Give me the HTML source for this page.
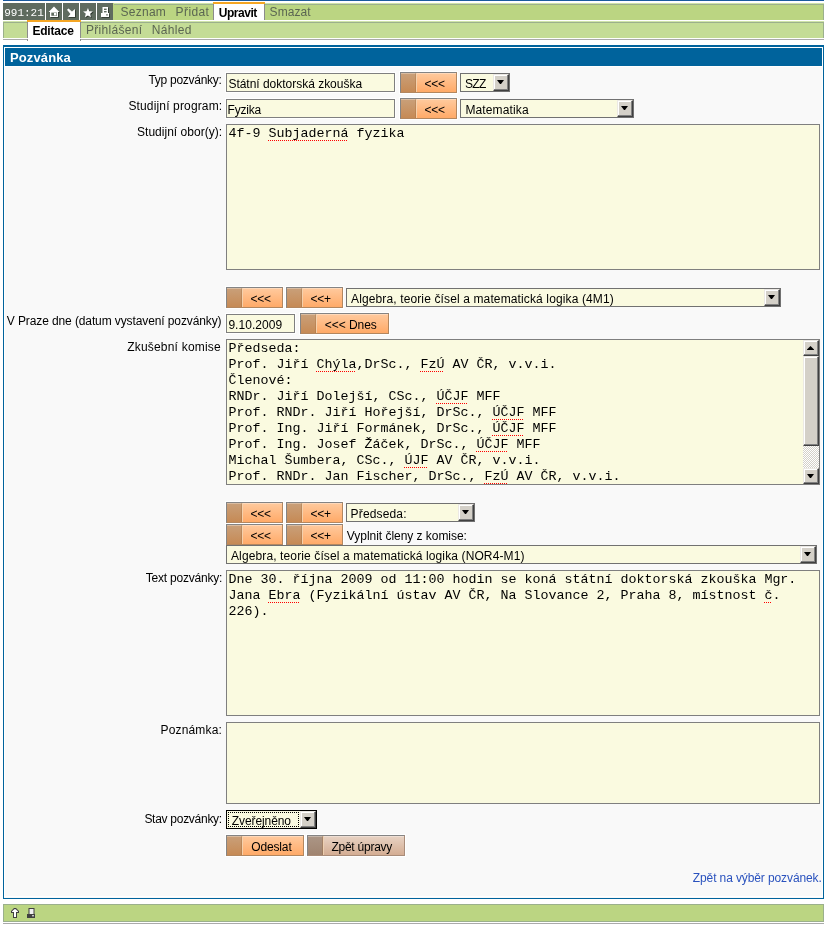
<!DOCTYPE html>
<html lang="cs"><head><meta charset="utf-8"><title>Pozvánka</title>
<style>
html,body{margin:0;padding:0;background:#fff;}
#r{will-change:transform;position:relative;width:827px;height:925px;overflow:hidden;background:#fff;font:12px/14px "Liberation Sans",Arial,sans-serif;color:#000;}
#r div,#r span,#r a,#r svg,#r i{position:absolute;box-sizing:border-box;white-space:nowrap;}
#r span,#r a{line-height:14px;height:14px;}
.inp{background:#fafae0;border:1px solid #7f7f7f;height:19px;box-shadow:0 0 0 1px #fff;}
.sel{background:#fafae0;border:1px solid #717171;height:19px;}
.db,.sb{background:#d4d0c8;border:1px solid;border-color:#ece9e4 #404040 #404040 #ece9e4;box-shadow:inset -1px -1px 0 #808080,inset 1px 1px 0 #fff;}
.sel .db{right:0;top:0;width:16px;height:17px;}
.db:after{content:"";position:absolute;left:3px;top:5px;width:7px;height:4px;background:#000;clip-path:polygon(0 0,100% 0,57% 100%,43% 100%);}
.btn{height:21px;border:1px solid;border-color:#848484 #b3875f #b3875f #848484;background:linear-gradient(#ffca9e,#ffaa68);}
.btn{box-shadow:0 0 0 1px #fff,inset 0 1px 0 rgba(255,255,255,.3);}
.btn i{left:0;top:0;width:16px;height:19px;background:linear-gradient(#c9a07a,#c68a55);border-right:1px solid rgba(255,224,190,.8);box-shadow:inset -1px 0 0 rgba(150,90,40,.25),inset 0 1px 0 rgba(255,255,255,.3);}
.btn.g{background:linear-gradient(#e8d3c4,#d4ad93);border-color:#848484 #a98c79 #a98c79 #848484;}
.btn.g i{background:linear-gradient(#ab9686,#a08470);}
.ta{background:#fafae0;border:1px solid #7f7f7f;font:13.333px/16px "Liberation Mono","Courier New",monospace;}
.ta>div.l{left:1.5px;height:16px;line-height:16px;}
.ta u{text-decoration:none;position:relative;}
.ta u:after{content:"";position:absolute;left:-0.5px;right:0.5px;top:14px;height:1px;background:repeating-linear-gradient(90deg,#f00 0 1px,transparent 1px 2px);}
.nv{color:#5b6652;}
.bd{font-weight:bold;}
</style></head>
<body><div id="r">
<div style="left:3px;top:0px;width:821px;height:1px;background:#1a5a9e;"></div>
<div style="left:3px;top:3px;width:821px;height:1px;background:#cfe3a8;"></div>
<div style="left:3px;top:4px;width:821px;height:1px;background:#9bb08c;"></div>
<div style="left:3px;top:5px;width:821px;height:15px;background:#bbd582;"></div>
<div style="left:823px;top:4px;width:1px;height:16px;background:#9bb08c;"></div>
<div style="left:3px;top:3px;width:42px;height:17px;background:#5f6b5f;"></div>
<span style="left:4.2px;top:7px;letter-spacing:0.0px;color:#fff;font:11px/12px 'Liberation Mono',monospace;height:12px;">991:21</span>
<div style="left:45px;top:3px;width:1px;height:17px;background:#fff;"></div>
<div style="left:46px;top:3px;width:16px;height:17px;background:#5f6b5f;"></div>
<div style="left:62px;top:3px;width:1px;height:17px;background:#fff;"></div>
<div style="left:63px;top:3px;width:16px;height:17px;background:#5f6b5f;"></div>
<div style="left:79px;top:3px;width:1px;height:17px;background:#fff;"></div>
<div style="left:80px;top:3px;width:16px;height:17px;background:#5f6b5f;"></div>
<div style="left:96px;top:3px;width:1px;height:17px;background:#fff;"></div>
<div style="left:97px;top:3px;width:16px;height:17px;background:#5f6b5f;"></div>
<div style="left:113px;top:3px;width:1px;height:17px;background:#bbd582;"></div>
<svg style="left:46px;top:3px" width="16" height="17" viewBox="0 0 16 17"><path d="M8 3.6 L13.4 9 L12 9 L12 14 L4 14 L4 9 L2.6 9 Z" fill="#2a322a" transform="translate(0.8,0.8)"/><path d="M8 3.6 L13.4 9 L12 9 L12 14 L4 14 L4 9 L2.6 9 Z" fill="#fff"/><rect x="5.3" y="9.6" width="5.7" height="3.2" fill="#5f6b5f"/><rect x="8" y="10" width="2.4" height="2.4" fill="#fff"/></svg>
<svg style="left:63px;top:3px" width="16" height="17" viewBox="0 0 16 17"><path d="M4 6.8 L5.6 5.4 L9 8.6 L12 6 L12 14 L5 14 L7.4 11 Z" fill="#2a322a" transform="translate(0.8,0.8)"/><path d="M4 6.8 L5.6 5.4 L9 8.6 L12 6 L12 14 L5 14 L7.4 11 Z" fill="#fff"/></svg>
<svg style="left:80px;top:3px" width="16" height="17" viewBox="0 0 16 17"><path d="M7.95 5.00 L9.33 8.20 L12.80 8.52 L10.18 10.83 L10.95 14.23 L7.95 12.45 L4.95 14.23 L5.72 10.83 L3.10 8.52 L6.57 8.20 Z" fill="#2a322a" transform="translate(0.8,0.8)"/><path d="M7.95 5.00 L9.33 8.20 L12.80 8.52 L10.18 10.83 L10.95 14.23 L7.95 12.45 L4.95 14.23 L5.72 10.83 L3.10 8.52 L6.57 8.20 Z" fill="#fff"/></svg>
<svg style="left:97px;top:3px" width="16" height="17" viewBox="0 0 16 17"><path d="M5.5 4 H11 V10 H12 V14 H4 V10 H5.5 Z" fill="#2a322a" transform="translate(0.8,0.8)"/><path d="M5.5 4 H11 V10 H12 V14 H4 V10 H5.5 Z" fill="#fff"/><rect x="7" y="5.6" width="2.6" height="1.4" fill="#5f6b5f"/><rect x="7" y="8" width="2.6" height="1.4" fill="#5f6b5f"/><rect x="9" y="11.4" width="2" height="1" fill="#5f6b5f"/></svg>
<span class="nv" style="left:120.6px;top:5px;letter-spacing:0.24px;">Seznam</span>
<span class="nv" style="left:175.6px;top:5px;letter-spacing:0.4px;">Přidat</span>
<div style="left:213px;top:2px;width:52px;height:2px;background:#f5a623;"></div>
<div style="left:213px;top:4px;width:52px;height:16px;background:#fff;border-left:1px solid #8c8c8c;border-right:1px solid #8c8c8c;"></div>
<span class="bd" style="left:218.8px;top:6px;letter-spacing:-0.467px;">Upravit</span>
<span class="nv" style="left:269.6px;top:5px;letter-spacing:0.08px;">Smazat</span>
<div style="left:3px;top:21px;width:821px;height:1px;background:#cfe3a8;"></div>
<div style="left:3px;top:22px;width:821px;height:1px;background:#9bb08c;"></div>
<div style="left:3px;top:23px;width:821px;height:15px;background:#c4dc96;"></div>
<div style="left:3px;top:22px;width:1px;height:16px;background:#9bb08c;"></div>
<div style="left:823px;top:22px;width:1px;height:16px;background:#9bb08c;"></div>
<div style="left:3px;top:39px;width:821px;height:1px;background:#aaaaaa;"></div>
<div style="left:27px;top:20px;width:54px;height:2px;background:#f5a623;"></div>
<div style="left:27px;top:22px;width:54px;height:19px;background:#fff;border-left:1px solid #8c8c8c;border-right:1px solid #8c8c8c;"></div>
<div style="left:27px;top:38px;width:54px;height:1px;background:#fff;"></div>
<span class="bd" style="left:32.4px;top:24px;letter-spacing:-0.2px;">Editace</span>
<span class="nv" style="left:86.0px;top:23px;letter-spacing:0.311px;">Přihlášení</span>
<span class="nv" style="left:151.8px;top:23px;letter-spacing:0.32px;">Náhled</span>
<div style="left:3px;top:45px;width:821px;height:854px;background:#f9f9f9;border:1px solid #00639c;border-top-width:2px;"></div>
<div style="left:4px;top:47px;width:819px;height:850px;background:transparent;border:1px solid #fff;"></div>
<div style="left:5px;top:48px;width:817px;height:18px;background:#00639c;"></div>
<span style="left:10.0px;top:50px;letter-spacing:0.114px;color:#fff;font:bold 13px/15px 'Liberation Sans',sans-serif;height:15px;">Pozvánka</span>
<div style="left:5px;top:66px;width:817px;height:1px;background:#fff;"></div>
<span style="left:148.4px;top:73px;letter-spacing:-0.267px;">Typ pozvánky:</span>
<div class="inp" style="left:226px;top:73px;width:169px"></div>
<span style="left:228.4px;top:77px;letter-spacing:-0.017px;">Státní doktorská zkouška</span>
<div class="btn" style="left:400px;top:72px;width:57px"><i></i></div>
<span style="left:424.5px;top:77px;letter-spacing:-0.2px;">&lt;&lt;&lt;</span>
<div class="sel" style="left:460px;top:73px;width:50px;"><div class="db"></div></div>
<span style="left:465px;top:77px;letter-spacing:-0.7px;">SZZ</span>
<span style="left:128.4px;top:99px;letter-spacing:0.15px;">Studijní program:</span>
<div class="inp" style="left:226px;top:99px;width:169px"></div>
<span style="left:227.6px;top:103px;letter-spacing:-0.24px;">Fyzika</span>
<div class="btn" style="left:400px;top:98px;width:57px"><i></i></div>
<span style="left:424.5px;top:103px;letter-spacing:-0.2px;">&lt;&lt;&lt;</span>
<div class="sel" style="left:460px;top:99px;width:174px;"><div class="db"></div></div>
<span style="left:465.4px;top:103px;letter-spacing:0.133px;">Matematika</span>
<span style="left:137.0px;top:125px;letter-spacing:0.025px;">Studijní obor(y):</span>
<div class="ta" style="left:226px;top:124px;width:594px;height:146px"><div class="l" style="top:1px">4f-9 <u>Subjaderná</u> fyzika</div></div>
<div class="btn" style="left:226px;top:287px;width:57px"><i></i></div>
<span style="left:250.5px;top:292px;letter-spacing:-0.2px;">&lt;&lt;&lt;</span>
<div class="btn" style="left:286px;top:287px;width:57px"><i></i></div>
<span style="left:310.5px;top:292px;letter-spacing:-0.2px;">&lt;&lt;+</span>
<div class="sel" style="left:346px;top:288px;width:435px;"><div class="db"></div></div>
<span style="left:351.0px;top:292px;letter-spacing:0.128px;">Algebra, teorie čísel a matematická logika (4M1)</span>
<span style="left:6.8px;top:314px;letter-spacing:-0.108px;">V Praze dne (datum vystavení pozvánky)</span>
<div class="inp" style="left:226px;top:314px;width:69px"></div>
<span style="left:228.4px;top:318px;letter-spacing:0.05px;">9.10.2009</span>
<div class="btn" style="left:300px;top:313px;width:89px"><i></i></div>
<span style="left:324.8px;top:318px;letter-spacing:-0.057px;">&lt;&lt;&lt; Dnes</span>
<span style="left:127.2px;top:340px;letter-spacing:0.2px;">Zkušební komise</span>
<div class="ta" style="left:226px;top:339px;width:594px;height:146px"><div class="l" style="top:1px">Předseda:</div><div class="l" style="top:17px">Prof. Jiří <u>Chýla</u>,DrSc., <u>FzÚ</u> AV ČR, v.v.i.</div><div class="l" style="top:33px">Členové:</div><div class="l" style="top:49px">RNDr. Jiří Dolejší, CSc., <u>ÚČJF</u> MFF</div><div class="l" style="top:65px">Prof. RNDr. Jiří Hořejší, DrSc., <u>ÚČJF</u> MFF</div><div class="l" style="top:81px">Prof. Ing. Jiří Formánek, DrSc., <u>ÚČJF</u> MFF</div><div class="l" style="top:97px">Prof. Ing. Josef Žáček, DrSc., <u>ÚČJF</u> MFF</div><div class="l" style="top:113px">Michal Šumbera, CSc., <u>ÚJF</u> AV ČR, v.v.i.</div><div class="l" style="top:129px">Prof. RNDr. Jan Fischer, DrSc., <u>FzÚ</u> AV ČR, v.v.i.</div><div style="left:576px;top:0;width:16px;height:144px;background:#ebe9e4;background-image:repeating-conic-gradient(#fff 0 25%,#d4d0c8 0 50%);background-size:2px 2px;">
<div class="sb" style="left:0;top:0;width:16px;height:16px"><svg style="left:3px;top:5px" width="7" height="4" viewBox="0 0 7 4"><path d="M3.5 0 L7 3.5 L7 4 L0 4 L0 3.5 Z" fill="#000"/></svg></div>
<div class="sb" style="left:0;top:16px;width:16px;height:90px"></div>
<div class="sb db" style="left:0;top:128px;width:16px;height:16px"></div>
</div></div>
<div class="btn" style="left:226px;top:502px;width:57px"><i></i></div>
<span style="left:250.5px;top:507px;letter-spacing:-0.2px;">&lt;&lt;&lt;</span>
<div class="btn" style="left:286px;top:502px;width:57px"><i></i></div>
<span style="left:310.5px;top:507px;letter-spacing:-0.2px;">&lt;&lt;+</span>
<div class="sel" style="left:346px;top:503px;width:129px;"><div class="db"></div></div>
<span style="left:350.6px;top:507px;letter-spacing:0.15px;">Předseda:</span>
<div class="btn" style="left:226px;top:524px;width:57px"><i></i></div>
<span style="left:250.5px;top:529px;letter-spacing:-0.2px;">&lt;&lt;&lt;</span>
<div class="btn" style="left:286px;top:524px;width:57px"><i></i></div>
<span style="left:310.5px;top:529px;letter-spacing:-0.2px;">&lt;&lt;+</span>
<span style="left:346.8px;top:529px;letter-spacing:-0.036px;">Vyplnit členy z komise:</span>
<div class="sel" style="left:226px;top:545px;width:591px;"><div class="db"></div></div>
<span style="left:231.0px;top:549px;letter-spacing:0.118px;">Algebra, teorie čísel a matematická logika (NOR4-M1)</span>
<span style="left:145.8px;top:571px;letter-spacing:-0.215px;">Text pozvánky:</span>
<div class="ta" style="left:226px;top:570px;width:594px;height:146px"><div class="l" style="top:1px">Dne 30. října 2009 od 11:00 hodin se koná státní doktorská zkouška Mgr.</div><div class="l" style="top:17px">Jana <u>Ebra</u> (Fyzikální ústav AV ČR, Na Slovance 2, Praha 8, místnost <u>č</u>.</div><div class="l" style="top:33px">226).</div></div>
<span style="left:160.6px;top:723px;letter-spacing:0.15px;">Poznámka:</span>
<div class="ta" style="left:226px;top:722px;width:594px;height:82px"></div>
<span style="left:144.4px;top:812px;letter-spacing:-0.277px;">Stav pozvánky:</span>
<div class="sel" style="left:226px;top:810px;width:91px;border-color:#000;"><div style="left:1px;top:1px;right:17px;bottom:1px;border:1px dotted #000"></div><div class="db"></div></div>
<span style="left:231.8px;top:814px;letter-spacing:-0.089px;">Zveřejněno</span>
<div class="btn" style="left:226px;top:835px;width:78px"><i></i></div>
<span style="left:251.2px;top:840px;letter-spacing:-0.133px;">Odeslat</span>
<div class="btn g" style="left:307px;top:835px;width:98px"><i></i></div>
<span style="left:331.4px;top:840px;letter-spacing:-0.24px;">Zpět úpravy</span>
<a style="left:692.8px;top:871px;letter-spacing:-0.109px;color:#2a52be;">Zpět na výběr pozvánek.</a>
<div style="left:3px;top:904px;width:821px;height:18px;background:#bbd582;border:1px solid #9bb08c;"></div>
<div style="left:3px;top:923px;width:821px;height:1px;background:#aaaaaa;"></div>
<svg style="left:10px;top:907px" width="11" height="12" viewBox="10 907 11 12"><path d="M14 908 L16 908 L19 911 L19 913 L17 913 L17 918 L13 918 L13 913 L11 913 L11 911 Z" fill="#404040"/><path d="M14.2 909.3 L15.8 909.3 L18 911.5 L18 912 L16 912 L16 917 L14 917 L14 912 L12 912 L12 911.5 Z" fill="#fff"/></svg>
<svg style="left:26px;top:907px" width="11" height="12" viewBox="0 0 11 12"><rect x="3" y="1.5" width="5" height="6" fill="#f0f0f0" stroke="#404040" stroke-width="1"/><rect x="1" y="7" width="8" height="4" fill="#404040"/><rect x="6" y="8.3" width="2" height="1" fill="#fff"/></svg>
</div></body></html>
